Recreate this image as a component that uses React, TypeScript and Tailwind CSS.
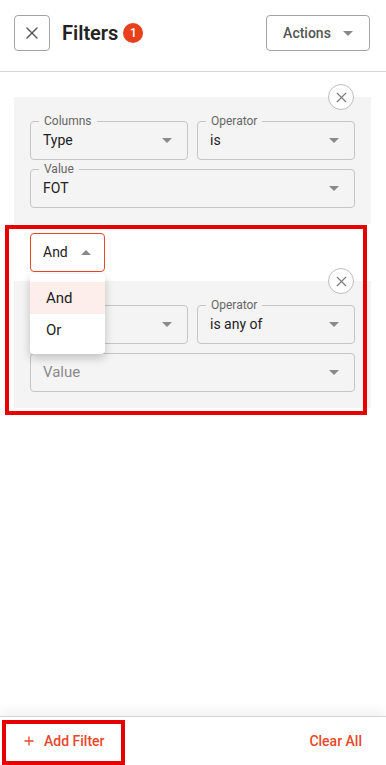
import { X, Plus } from "lucide-react";

const Caret = ({ up = false }: { up?: boolean }) => (
  <svg width="10" height="5" viewBox="0 0 10 5" className="shrink-0">
    <path d={up ? "M0 5 L5 0 L10 5 Z" : "M0 0 L10 0 L5 5 Z"} fill="#8a8a8a" />
  </svg>
);

const Field = ({
  label,
  value,
  placeholder,
  className,
}: {
  label?: string;
  value?: string;
  placeholder?: string;
  className?: string;
}) => (
  <div
    className={
      "relative flex h-[39px] items-center justify-between rounded-[4px] border border-[#c6c6c6] pl-[12px] pr-[15px] " +
      (className ?? "")
    }
  >
    {label && (
      <span className="absolute left-[8px] top-[-9px] bg-[#f4f4f4] px-[5px] text-[12px] leading-[16px] text-[#666]">
        {label}
      </span>
    )}
    {value ? (
      <span className="text-[14px] text-[#222]">{value}</span>
    ) : (
      <span className="text-[15px] text-[#8a8a8a]">{placeholder}</span>
    )}
    <Caret />
  </div>
);

const RemoveBtn = () => (
  <div className="absolute right-[17px] top-[-13px] flex h-[26px] w-[26px] items-center justify-center rounded-full border border-[#bdbdbd] bg-white">
    <X size={17} strokeWidth={1.6} color="#777" />
  </div>
);

export default function App() {
  return (
    <div
      className="relative flex h-[765px] w-[386px] flex-col overflow-hidden bg-white"
      style={{ fontFamily: "Roboto, 'Noto Sans', sans-serif" }}
    >
      {/* header */}
      <div className="flex h-[72px] shrink-0 items-start justify-between border-b border-[#d6d6d6] pl-[14px] pr-[16px] pt-[15px]">
        <div className="flex items-center">
          <button className="flex h-[36px] w-[36px] items-center justify-center rounded-[4px] border border-[#a3a3a3]">
            <X size={20} strokeWidth={1.6} color="#555" />
          </button>
          <span className="ml-[12px] text-[20px] font-semibold text-[#222]">Filters</span>
          <span className="ml-[5px] flex h-[20px] w-[20px] items-center justify-center rounded-full bg-[#e8401c] text-[12px] font-medium text-white">
            1
          </span>
        </div>
        <button className="flex h-[36px] w-[104px] items-center justify-center gap-[12px] rounded-[4px] border border-[#a3a3a3] text-[14px] font-medium text-[#555]">
          Actions
          <Caret />
        </button>
      </div>

      {/* body */}
      <div className="flex flex-1 flex-col pl-[14px] pr-[15px] pt-[25px]">
        <div className="relative bg-[#f4f4f4] px-[16px] pb-[16px] pt-[24px]">
          <RemoveBtn />
          <div className="flex gap-[9px]">
            <Field label="Columns" value="Type" className="flex-1" />
            <Field label="Operator" value="is" className="flex-1" />
          </div>
          <Field label="Value" value="FOT" className="mt-[9px]" />
        </div>

        <div className="relative px-[16px] py-[9px]">
          <div className="flex h-[39px] w-[75px] items-center justify-between rounded-[4px] border border-[#e8472a] bg-white pl-[12px] pr-[13px]">
            <span className="text-[14px] text-[#222]">And</span>
            <Caret up />
          </div>
          <div className="absolute left-[16px] top-[50px] z-20 w-[75px] rounded-[4px] bg-white py-[8px] shadow-[0_4px_10px_rgba(0,0,0,0.22)]">
            <div className="flex h-[32px] items-center bg-[#fdeeeb] pl-[16px] text-[15px] text-[#222]">And</div>
            <div className="flex h-[32px] items-center pl-[16px] text-[15px] text-[#222]">Or</div>
          </div>
        </div>

        <div className="relative bg-[#f4f4f4] px-[16px] pb-[16px] pt-[24px]">
          <RemoveBtn />
          <div className="flex gap-[9px]">
            <Field className="flex-1" />
            <Field label="Operator" value="is any of" className="flex-1" />
          </div>
          <Field placeholder="Value" className="mt-[9px]" />
        </div>
      </div>

      {/* footer */}
      <div className="flex h-[49px] shrink-0 items-center justify-between border-t border-[#d6d6d6] pl-[22px] pr-[24px] shadow-[0_-6px_10px_rgba(0,0,0,0.05)]">
        <button className="flex items-center gap-[8px] text-[14px] font-medium text-[#e8472a]">
          <Plus size={14} strokeWidth={2.2} />
          Add Filter
        </button>
        <button className="text-[14px] font-medium text-[#e8472a]">Clear All</button>
      </div>

      {/* annotation boxes */}
      <div className="pointer-events-none absolute left-[5px] top-[225px] z-30 h-[190px] w-[362px] border-[4px] border-[#e60000]" />
      <div className="pointer-events-none absolute left-[2px] top-[720px] z-30 h-[45px] w-[123px] border-[4px] border-[#e60000]" />
    </div>
  );
}
